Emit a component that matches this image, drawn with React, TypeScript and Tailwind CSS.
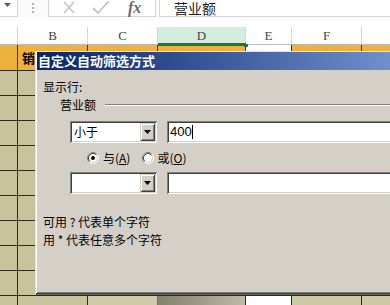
import React from 'react';

const CJK = "font-['Noto_Sans_CJK_SC','Noto_Sans',sans-serif]";

type Col = { w: string; hdr: string; r1: string; body: string; last: string };

const cols: Col[] = [
  { w: 'w-[18px]', hdr: 'bg-white border-r border-[#d6d6d6]', r1: 'bg-[#ecb23a] border-r border-[#3a3424]', body: 'bg-[#c9c39d] border-r border-[#2e2a1e]', last: 'bg-[#c9c39d] border-r border-[#2e2a1e]' },
  { w: 'w-[70px]', hdr: 'bg-white border-r border-[#d6d6d6]', r1: 'bg-[#ecb23a] border-r border-[#3a3424]', body: 'bg-[#c9c39d] border-r border-[#2e2a1e]', last: 'bg-[#c9c39d] border-r border-[#2e2a1e]' },
  { w: 'w-[70px]', hdr: 'bg-white border-r border-[#d6d6d6]', r1: 'bg-[#ecb23a] border-r border-[#3a3424]', body: 'bg-[#cfcaa8] border-r border-[#2e2a1e]', last: 'bg-[#cfcaa8] border-r border-[#3a8a5a]' },
  { w: 'w-[88px]', hdr: 'bg-[#d3eedd] border-r border-[#d6d6d6]', r1: 'bg-[#ecb23a] border-r border-[#3a3424] border-t border-t-[#217346]', body: 'bg-[#a8a690] border-r border-[#2e2a1e]', last: 'bg-linear-to-r from-[#82816c] to-[#bdbaa6] border-r border-[#2e2a1e]' },
  { w: 'w-[46px]', hdr: 'bg-white border-r border-[#d6d6d6]', r1: 'bg-white border-r border-[#3a3424]', body: 'bg-white border-r border-[#2e2a1e]', last: 'bg-white border-r border-[#2e2a1e]' },
  { w: 'w-[70px]', hdr: 'bg-white border-r border-[#d6d6d6]', r1: 'bg-[#ecb23a] border-r border-[#3a3424]', body: 'bg-[#cdc8a5] border-r border-[#2e2a1e]', last: 'bg-[#cdc8a5] border-r border-[#2e2a1e]' },
  { w: 'w-[28px]', hdr: 'bg-white', r1: 'bg-[#ecb23a]', body: 'bg-[#cdc8a5]', last: 'bg-[#cdc8a5]' },
];

const letters = ['', 'B', 'C', 'D', 'E', 'F', ''];

function Radio({ checked }: { checked: boolean }) {
  return (
    <svg width="12" height="12" viewBox="0 0 12 12" className="shrink-0">
      <circle cx="6" cy="6" r="4.5" fill="#ffffff" />
      <path d="M2.11 9.89 A5.5 5.5 0 0 1 9.89 2.11" stroke="#808080" strokeWidth="1" fill="none" />
      <path d="M9.89 2.11 A5.5 5.5 0 0 1 2.11 9.89" stroke="#ffffff" strokeWidth="1" fill="none" />
      <path d="M2.82 9.18 A4.5 4.5 0 0 1 9.18 2.82" stroke="#404040" strokeWidth="1" fill="none" />
      <path d="M9.18 2.82 A4.5 4.5 0 0 1 2.82 9.18" stroke="#d4d0c8" strokeWidth="1" fill="none" />
      {checked && <circle cx="6" cy="6" r="1.9" fill="#000000" />}
    </svg>
  );
}

function Combo({ text }: { text: string }) {
  return (
    <div className="w-[87px] h-[22px] bg-white p-[2px] flex shrink-0 shadow-[inset_1px_1px_0_#808080,inset_-1px_-1px_0_#ffffff,inset_2px_2px_0_#404040,inset_-2px_-2px_0_#d4d0c8]">
      <div className={`flex-1 pl-[2px] text-[12px] leading-[18px] text-black ${CJK}`}>{text}</div>
      <div className="w-[15px] h-[18px] bg-[#d4d0c8] flex items-center justify-center shadow-[inset_1px_1px_0_#d4d0c8,inset_-1px_-1px_0_#404040,inset_2px_2px_0_#ffffff,inset_-2px_-2px_0_#808080]">
        <svg width="7" height="4" viewBox="0 0 7 4">
          <path d="M0 0 H7 L3.5 4 Z" fill="#000000" />
        </svg>
      </div>
    </div>
  );
}

function TextBox({ children }: { children?: React.ReactNode }) {
  return (
    <div className="w-[300px] shrink-0 h-[22px] bg-white p-[2px] flex items-center shadow-[inset_1px_1px_0_#808080,inset_-1px_-1px_0_#ffffff,inset_2px_2px_0_#404040,inset_-2px_-2px_0_#d4d0c8]">
      {children}
    </div>
  );
}

export default function App() {
  return (
    <div className={`relative w-[390px] h-[305px] overflow-hidden bg-white ${CJK}`}>
      {/* formula bar */}
      <div className="flex h-[17px] bg-[#fbfbfb]">
        <div className="w-[18px] h-[17px] bg-white border-r border-b border-[#d4d4d4] relative">
          <svg width="7" height="4" viewBox="0 0 7 4" className="absolute left-[4px] top-[3px]">
            <path d="M0 0 H7 L3.5 4 Z" fill="#5a5a5a" />
          </svg>
        </div>
        <div className="w-[30px] flex flex-col items-center pt-[3px] gap-[2px]">
          <span className="w-[2px] h-[2px] bg-[#b4b4b4]" />
          <span className="w-[2px] h-[2px] bg-[#b4b4b4]" />
          <span className="w-[2px] h-[2px] bg-[#b4b4b4]" />
        </div>
        <div className="w-[108px] h-[17px] bg-white border-x border-b border-[#d4d4d4] flex items-center">
          <svg width="14" height="14" viewBox="0 0 14 14" className="ml-[13px]">
            <path d="M2 1 L12 12 M12 1 L2 12" stroke="#c4c4c4" strokeWidth="1.6" />
          </svg>
          <svg width="18" height="14" viewBox="0 0 18 14" className="ml-[16px]">
            <path d="M1 7 L6 12 L17 0" stroke="#c4c4c4" strokeWidth="1.8" fill="none" />
          </svg>
          <span className="ml-[18px] font-['Liberation_Serif',serif] italic font-bold text-[16px] leading-[16px] text-[#6a6a6a]">fx</span>
        </div>
        <div className="w-[3px]" />
        <div className="flex-1 h-[17px] bg-white border-l border-b border-[#d4d4d4] pl-[14px] text-[14px] leading-[16px] text-[#222]">
          营业额
        </div>
      </div>
      <div className="h-[10px] bg-white" />
      {/* column headers */}
      <div className="flex h-[18px] border-b border-[#b8b8b8]">
        {cols.map((c, i) => (
          <div
            key={i}
            className={`${c.w} h-full ${c.hdr} flex items-center justify-center font-['Liberation_Serif',serif] text-[13px] text-[#444] relative`}
          >
            {letters[i]}
            {i === 3 && <div className="absolute left-0 right-[-1px] bottom-[-1px] h-[2px] bg-[#217346]" />}
            {i === 3 && <div className="absolute right-[-3px] bottom-[-3px] w-[4px] h-[4px] bg-[#217346]" />}
          </div>
        ))}
      </div>
      {/* row 1 */}
      <div className="flex h-[26px] border-b border-[#2e2a1e]">
        {cols.map((c, i) => (
          <div key={i} className={`${c.w} h-full ${c.r1} flex items-center`}>
            {i === 1 && <span className="pl-[4px] text-[13px] font-bold text-black whitespace-nowrap">销</span>}
          </div>
        ))}
      </div>
      {/* body rows */}
      {Array.from({ length: 9 }).map((_, r) => (
        <div key={r} className="flex h-[25px] border-b border-[#2e2a1e]">
          {cols.map((c, i) => (
            <div key={i} className={`${c.w} h-full ${c.body}`} />
          ))}
        </div>
      ))}
      <div className="flex h-[25px]">
        {cols.map((c, i) => (
          <div key={i} className={`${c.w} h-full ${c.last}`} />
        ))}
      </div>

      {/* dialog */}
      <div className="absolute left-[35px] right-[-80px] top-[51px] h-[243px] bg-[#d4d0c8] pt-[1px] pl-[2px] shadow-[inset_1px_1px_0_#e4e2dc,inset_-1px_-1px_0_#404040,inset_2px_2px_0_#ffffff,inset_-2px_-2px_0_#808080,1px_1px_0_#6b6a5a]">
        <div className="h-[18px] bg-linear-to-r from-[#0a246a] to-[#8aa8e2] flex items-center pl-[1px] text-white font-bold text-[13px] leading-[18px] whitespace-nowrap">
          自定义自动筛选方式
        </div>
        <div className="pl-[6px] flex flex-col text-[12px] text-black">
          <div className="mt-[10px] h-[13px] leading-[13px]">显示行:</div>
          <div className="mt-[5px] h-[13px] flex items-center pl-[17px]">
            <span className="leading-[13px] whitespace-nowrap">营业额</span>
            <div className="flex-1 ml-[9px] h-0 border-t border-t-[#808080] border-b border-b-white" />
          </div>
          <div className="mt-[10px] flex pl-[27px] gap-[10px]">
            <Combo text="小于" />
            <TextBox>
              <span className="pl-[1px] font-['Liberation_Sans',sans-serif] text-[13px] leading-[16px]">400</span>
              <span className="w-[1px] h-[14px] bg-black" />
            </TextBox>
          </div>
          <div className="mt-[8px] h-[14px] flex items-center pl-[44px]">
            <Radio checked />
            <span className="ml-[4px] leading-[14px] whitespace-nowrap">
              与(<span className="underline">A</span>)
            </span>
            <div className="ml-[12px]">
              <Radio checked={false} />
            </div>
            <span className="ml-[3px] leading-[14px] whitespace-nowrap">
              或(<span className="underline">O</span>)
            </span>
          </div>
          <div className="mt-[7px] flex pl-[27px] gap-[10px]">
            <Combo text="" />
            <TextBox />
          </div>
          <div className="mt-[21px] h-[13px] leading-[13px] whitespace-nowrap">可用 ? 代表单个字符</div>
          <div className="mt-[5px] h-[13px] leading-[13px] whitespace-nowrap">用 * 代表任意多个字符</div>
        </div>
      </div>
    </div>
  );
}
